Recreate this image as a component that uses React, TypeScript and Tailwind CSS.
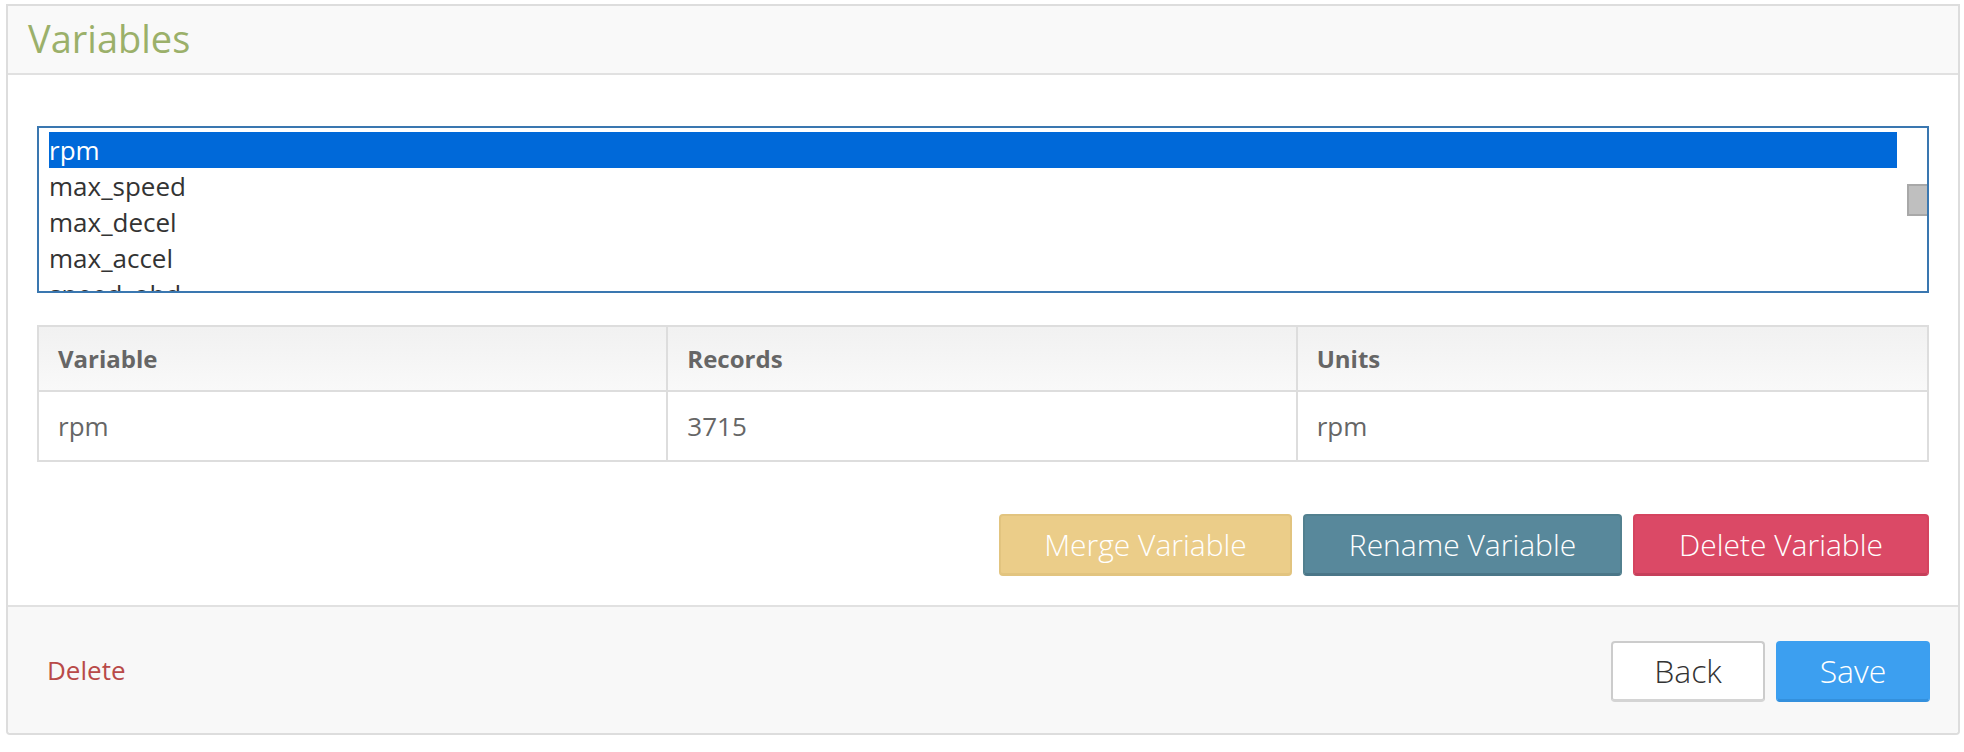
import React from "react";

const items = ["rpm", "max_speed", "max_decel", "max_accel", "speed_obd"];

export default function App() {
  return (
    <div
      className="w-[1964px] h-[752px] bg-white pt-[4px] pl-[6px]"
      style={{ fontFamily: '"Open Sans", "Liberation Sans", sans-serif' }}
    >
      <div className="w-[1954px] border-2 border-[#dddddd] rounded-b-[4px] bg-white">
        {/* Header */}
        <div className="h-[69px] bg-[#f9f9f9] border-b-2 border-[#e1e1e1] flex items-center pl-[20px]">
          <h2 className="text-[38px] leading-[44px] text-[#9bb06a] font-normal mt-[-4px]">Variables</h2>
        </div>

        {/* Body */}
        <div className="px-[29px] pt-[51px] pb-[29px]">
          {/* Listbox */}
          <div className="relative h-[167px] border-2 border-[#3a77b0] overflow-hidden pt-[4px] pl-[10px] pr-[30px]">
            {items.map((it, i) => (
              <div
                key={it}
                className={
                  i === 0
                    ? "h-[36px] leading-[36px] text-[26px] bg-[#0069d9] text-white"
                    : "h-[36px] leading-[36px] text-[26px] text-[#333333]"
                }
              >
                {it}
              </div>
            ))}
            <div className="absolute right-0 top-[56px] w-[20px] h-[32px] bg-[#bfbfbf] border-2 border-r-0 border-[#a8a8a8]" />
          </div>

          {/* Table */}
          <div className="mt-[32px] border-2 border-[#dddddd]">
            <div className="grid grid-cols-3 h-[65px] bg-gradient-to-b from-[#f1f1f1] to-[#f9f9f9] border-b-2 border-[#dddddd]">
              {["Variable", "Records", "Units"].map((h, i) => (
                <div
                  key={h}
                  className={
                    i < 2
                      ? "flex items-center px-[19px] text-[24px] font-bold text-[#666666] border-r-2 border-[#dddddd]"
                      : "flex items-center px-[19px] text-[24px] font-bold text-[#666666]"
                  }
                >
                  {h}
                </div>
              ))}
            </div>
            <div className="grid grid-cols-3 h-[68px]">
              {["rpm", "3715", "rpm"].map((c, i) => (
                <div
                  key={i}
                  className={
                    i < 2
                      ? "flex items-center px-[19px] text-[26px] text-[#666666] border-r-2 border-[#dddddd]"
                      : "flex items-center px-[19px] text-[26px] text-[#666666]"
                  }
                >
                  {c}
                </div>
              ))}
            </div>
          </div>

          {/* Action buttons */}
          <div className="mt-[52px] flex justify-end gap-[11px]">
            <button className="w-[293px] h-[62px] rounded-[4px] bg-[#ebcd89] border-2 border-[#e2c47f] border-b-[3px] text-white text-[30px] font-light">
              Merge Variable
            </button>
            <button className="w-[319px] h-[62px] rounded-[4px] bg-[#58889b] border-2 border-[#52808f] border-b-[3px] border-b-[#4a7688] text-white text-[30px] font-light">
              Rename Variable
            </button>
            <button className="w-[296px] h-[62px] rounded-[4px] bg-[#db4966] border-2 border-[#d5445f] border-b-[3px] border-b-[#c63f5a] text-white text-[30px] font-light">
              Delete Variable
            </button>
          </div>
        </div>

        {/* Footer */}
        <div className="h-[128px] bg-[#f8f8f8] border-t-2 border-[#e1e1e1] rounded-b-[4px] flex items-center justify-between pl-[39px] pr-[28px]">
          <span className="text-[26px] text-[#b94a48]">Delete</span>
          <div className="flex gap-[11px] mt-[3px]">
            <button className="w-[154px] h-[61px] rounded-[4px] bg-white border-2 border-[#cccccc] border-b-[3px] border-b-[#d4d4d4] text-[#333333] text-[32px] font-light">
              Back
            </button>
            <button className="w-[154px] h-[61px] rounded-[4px] bg-[#3c9ff0] border-2 border-[#3c9ff0] border-b-[3px] border-b-[#3390dd] text-white text-[32px] font-light">
              Save
            </button>
          </div>
        </div>
      </div>
    </div>
  );
}
